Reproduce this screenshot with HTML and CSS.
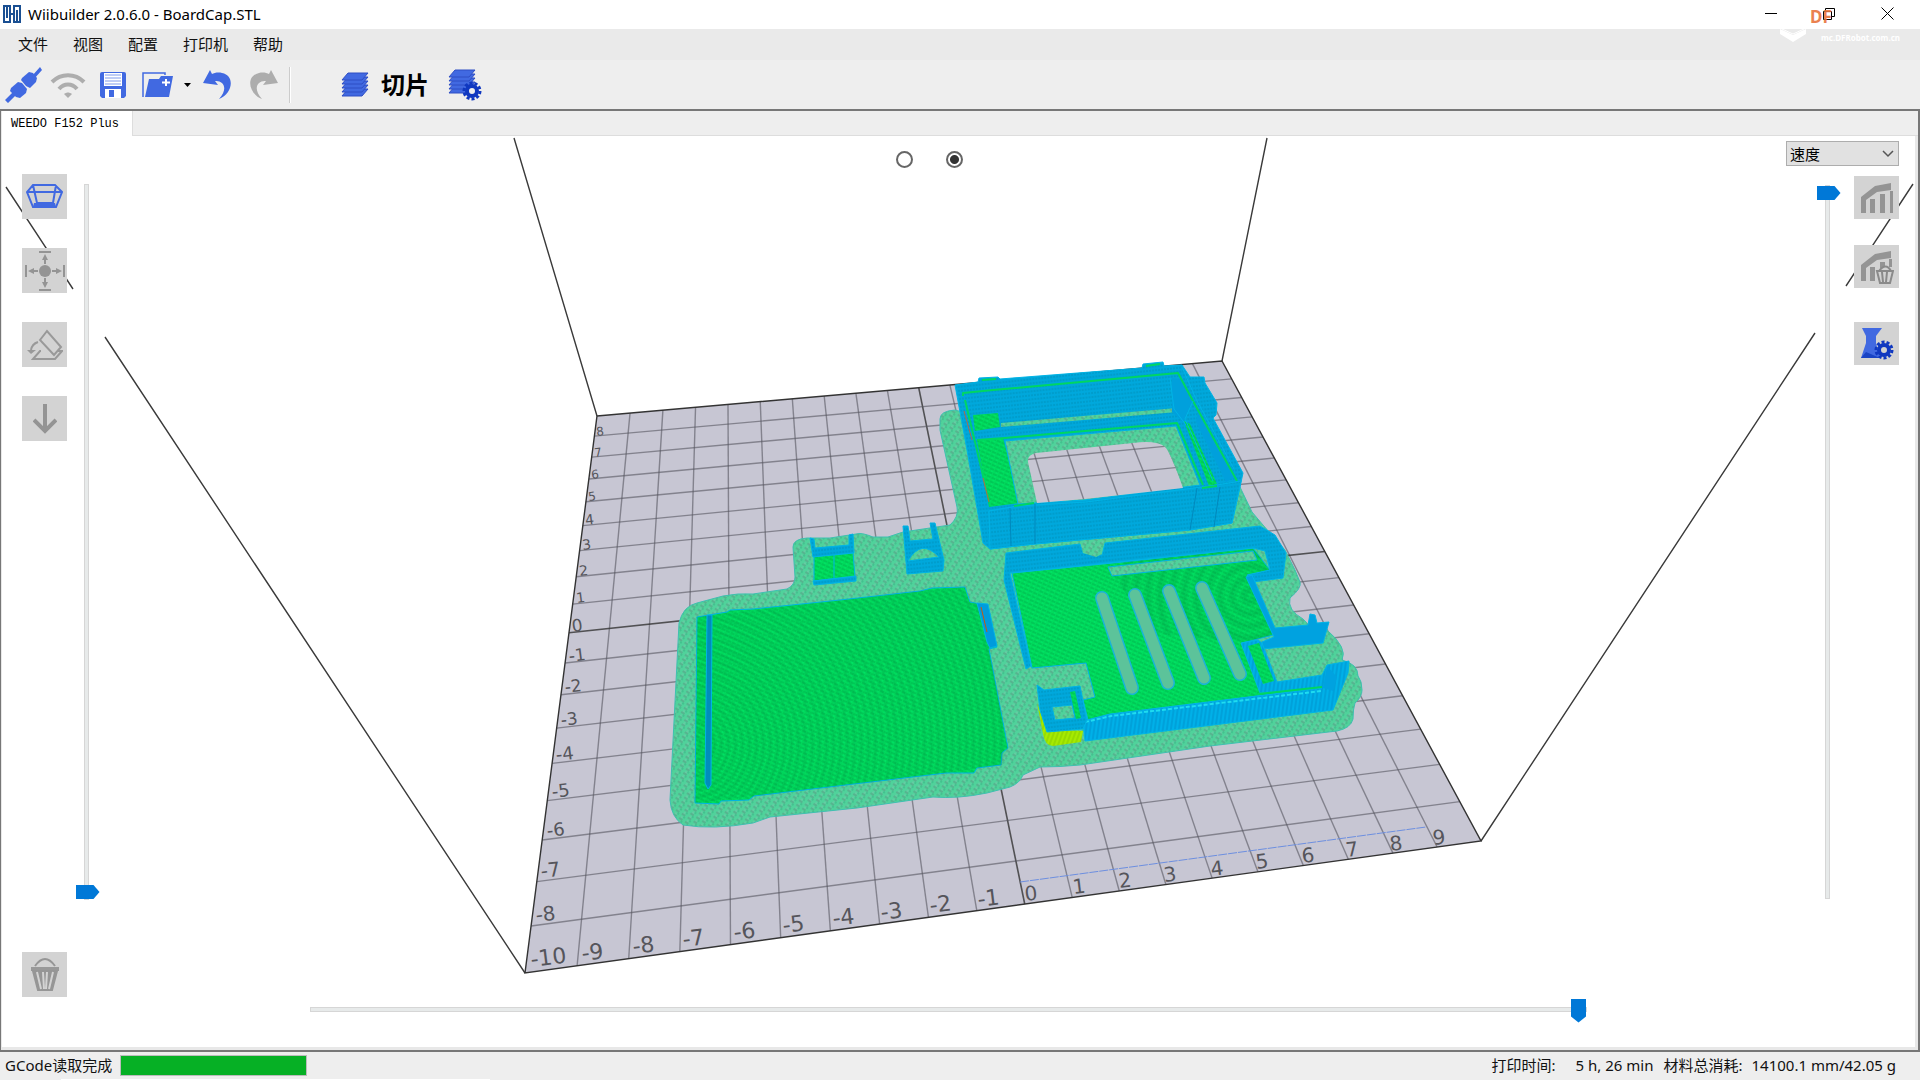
FILE: index.html
```html
<!DOCTYPE html>
<html lang="zh-CN">
<head>
<meta charset="utf-8">
<title>Wiibuilder 2.0.6.0 - BoardCap.STL</title>
<link rel="stylesheet" href="styles.css">
</head>
<body>
<div class="app">
  <header class="titlebar">
    <svg class="app-icon" width="18" height="18" viewBox="0 0 18 18" fill="none" stroke="#1a4f92" stroke-width="2"><path d="M1 1v16h6V1zM4 1v12M11 1v16h6V1zM14 5v12M6 9h6"/><path d="M9 3v4M9 11v4" stroke="#fff" stroke-width="1"/></svg>
    <h1 class="title">Wiibuilder 2.0.6.0 - BoardCap.STL</h1>
    <div class="window-buttons">
      <button type="button" aria-label="最小化"><svg width="12" height="12" viewBox="0 0 12 12"><path d="M0 5.500h12" stroke="#000"/></svg></button>
      <button type="button" class="restore" aria-label="还原"><svg width="12" height="12" viewBox="0 0 12 12" fill="none" stroke="#000"><path d="M.5 3.500h8v8h-8zM2.500 3.500v-3h9v8h-3"/></svg><span class="mark">DF</span></button>
      <button type="button" aria-label="关闭"><svg width="13" height="13" viewBox="0 0 13 13"><path d="M.5.5l12 12M12.500.5l-12 12" stroke="#000"/></svg></button>
    </div>
  </header>

  <nav class="menubar">
    <button type="button">文件</button>
    <button type="button">视图</button>
    <button type="button">配置</button>
    <button type="button">打印机</button>
    <button type="button">帮助</button>
    <div class="watermark">
      <svg width="28" height="14" viewBox="0 0 28 14"><path d="M1 0v5l13 8 13-8V0l-13 6z" fill="#fff"/><path d="M3 0l11 5L25 0" fill="none" stroke="#fff"/></svg>
      <span>mc.DFRobot.com.cn</span>
    </div>
  </nav>

  <div class="toolbar">
    <button type="button" aria-label="连接"><svg width="38" height="38" viewBox="0 0 38 38" fill="#4169e1"><path d="M1 34l9-9 3 3-9 9zM28 10l8-9 2 3-8 9z"/><path d="M7 22l7-6 4 1 5 6-1 4-6 5-4-1-6-6z"/><path d="M18 12l7-6 4 1 4 5-1 4-6 6-4-2-5-6z"/></svg></button>
    <button type="button" aria-label="无线"><svg width="36" height="28" viewBox="0 0 36 28" fill="none" stroke="#adadad"><path d="M2 11c9-9 23-9 32 0" stroke-width="4"/><path d="M9 18c5-6 13-6 18 0" stroke-width="4"/><path d="M14 23c3-2 5-2 8 0l-4 4z" fill="#adadad" stroke="none"/></svg></button>
    <button type="button" aria-label="保存"><svg width="28" height="28" viewBox="0 0 28 28"><path d="M3 1h22q2 0 2 2v22l-2 2H3l-2-2V3q0-2 2-2z" fill="#4169e1"/><path d="M5 2h18v13H5z" fill="#fff"/><path d="M6 4h16M6 7h16M6 10h16M6 13h16" stroke="#7e9aec"/><path d="M6 18h16v9H6z" fill="#fff"/><path d="M10 19h5v7h-5z" fill="#4169e1"/></svg></button>
    <button type="button" aria-label="打开"><svg width="34" height="28" viewBox="0 0 34 28" fill="#4169e1"><path d="M2 26V2h22v2" fill="none" stroke="#4169e1" stroke-width="1.500"/><path d="M8 8h10l2-3h12l-4 21H4z"/><path d="M25 8v7M21 11.500h8" stroke="#fff" stroke-width="2"/></svg></button>
    <button type="button" class="drop" aria-label="最近文件"><svg width="7" height="4" viewBox="0 0 7 4"><path d="M0 0h7L3.500 4z"/></svg></button>
    <button type="button" aria-label="撤销"><svg width="30" height="32" viewBox="0 0 30 32"><path d="M7 1L0 14l15 2-3-4c8-1 14 7 4 18C29 25 33 7 19 4c-4-1-8 0-10 1z" fill="#4169e1"/></svg></button>
    <button type="button" aria-label="重做"><svg width="30" height="32" viewBox="0 0 30 32"><path d="M23 1l7 13-15 2 3-4c-8-1-14 7-4 18C1 25-3 7 11 4c4-1 8 0 10 1z" fill="#adadad"/></svg></button>
    <span class="separator"></span>
    <button type="button" class="slice">
      <svg width="28" height="26" viewBox="0 0 28 26" stroke="#2f4ec4"><g fill="#4169e1"><path d="M1 24l6-7h20l-6 7z"/><path d="M1 20l6-7h20l-6 7z"/><path d="M1 16l6-7h20l-6 7z"/><path d="M1 12l6-7h20l-6 7z"/><path d="M1 8l6-7h20l-6 7z"/></g></svg>
      <span>切片</span>
    </button>
    <button type="button" class="slice-settings" aria-label="切片设置"><svg width="34" height="32" viewBox="0 0 34 32"><g fill="#4169e1" stroke="#2f4ec4"><path d="M1 24l6-7h20l-6 7z"/><path d="M1 20l6-7h20l-6 7z"/><path d="M1 16l6-7h20l-6 7z"/><path d="M1 12l6-7h20l-6 7z"/><path d="M1 8l6-7h20l-6 7z"/></g><circle cx="24" cy="22" r="8" fill="none" stroke="#1038c0" stroke-width="3" stroke-dasharray="3 2"/><circle cx="24" cy="22" r="5" fill="#eee" stroke="#1038c0" stroke-width="4"/></svg></button>
  </div>

  <main class="panel">
    <div class="tabs"><button type="button" class="tab">WEEDO F152 Plus</button></div>
    <div class="viewport">
      <svg class="scene" viewBox="2 136 1913 911">
        <defs>
          <pattern id="skirt" width="7" height="5" patternUnits="userSpaceOnUse" patternTransform="rotate(33)"><rect width="7" height="5" fill="#50d29b"/><path d="M0 1h4" stroke="#5c9684"/><path d="M3 3h2" stroke="#35b383"/><path d="M1 4h2" stroke="#7cc4ab"/></pattern>
          <pattern id="fill" width="5" height="4" patternUnits="userSpaceOnUse" patternTransform="rotate(24)"><rect width="5" height="4" fill="#00da5c"/><path d="M0 1h4" stroke="#00b850"/><path d="M2 3h2" stroke="#00e86a"/></pattern>
          <pattern id="wall" width="3" height="4" patternUnits="userSpaceOnUse" patternTransform="rotate(-6)"><rect width="3" height="4" fill="#00a8dc"/><path d="M0 1h2" stroke="#0093bc"/></pattern>
          <pattern id="ribs" width="4" height="6" patternUnits="userSpaceOnUse" patternTransform="rotate(8)"><rect width="4" height="6" fill="#00b0e8"/><path d="M1 0v6" stroke="#0092cc"/></pattern>
          <pattern id="lime" width="4" height="4" patternUnits="userSpaceOnUse" patternTransform="rotate(20)"><rect width="4" height="4" fill="#a6ea00"/><path d="M1 0v4" stroke="#86cc00"/></pattern>
          <radialGradient id="rings" gradientUnits="userSpaceOnUse" cx="690" cy="745" r="7" spreadMethod="repeat"><stop offset="0" stop-color="#007a38" stop-opacity="0"/><stop offset=".5" stop-color="#007a38" stop-opacity=".2"/><stop offset="1" stop-color="#007a38" stop-opacity="0"/></radialGradient>
          <radialGradient id="rings2" gradientUnits="userSpaceOnUse" cx="1250" cy="596" r="12" spreadMethod="repeat"><stop offset="0" stop-color="#007a38" stop-opacity="0"/><stop offset=".5" stop-color="#007a38" stop-opacity=".22"/><stop offset="1" stop-color="#007a38" stop-opacity="0"/></radialGradient>
          <clipPath id="window"><path d="M1037 503l-9-41q-1-7 8-9l97-10q24-3 32 4 5 4 18 41l-98 11z"/></clipPath>
        </defs>

        <g class="box"><path d="M514 138l83 278M1267 138l-45 223M6 187l67 102M105 337l420 636M1481 841l334-508M1846 286l67-102"/></g>

        <g id="plate">
          <path d="M597 416L1222 361 1481 841 525 973z" fill="#c7c6d3"/>
          <g id="grid"></g>
          <path d="M597 416L1222 361 1481 841 525 973z" class="edge"/>
        </g>
        <path d="M1020 882L1426 827" class="origin"/>

        <g class="axis">
          <g font-size="22"><text x="532" y="967">-10</text><text x="583" y="961">-9</text><text x="634" y="954">-8</text><text x="684" y="947">-7</text><text x="735" y="940">-6</text><text x="784" y="933">-5</text><text x="834" y="926">-4</text><text x="882" y="920">-3</text><text x="931" y="913">-2</text><text x="979" y="907">-1</text></g>
          <g font-size="20"><text x="1026" y="901">0</text><text x="1074" y="894">1</text><text x="1120" y="888">2</text><text x="1165" y="882">3</text><text x="1212" y="876">4</text><text x="1257" y="869">5</text><text x="1303" y="863">6</text><text x="1347" y="857">7</text><text x="1391" y="851">8</text><text x="1434" y="845">9</text><text x="537" y="922">-8</text><text x="542" y="878">-7</text></g>
          <g font-size="18"><text x="548" y="837">-6</text><text x="553" y="798">-5</text><text x="557" y="761">-4</text></g>
          <g font-size="17"><text x="562" y="726">-3</text><text x="566" y="693">-2</text><text x="570" y="662">-1</text><text x="573" y="632">0</text></g>
          <g font-size="14"><text x="577" y="603">1</text><text x="580" y="576">2</text><text x="583" y="550">3</text><text x="586" y="525">4</text></g>
          <g font-size="12"><text x="589" y="501">5</text><text x="592" y="479">6</text><text x="595" y="457">7</text><text x="597" y="436">8</text></g>
        </g>

        <path fill="url(#skirt)" stroke="#3fc0b0" d="M670 800q1 17 13 25 30 5 70-2l17-6 87-9 76-11q25 2 54-4l23-6q10-4 13-12l17-8q20 0 40-2l130-19 127-15q14-3 16-12 0-10 2-16 7-6 7-13 0-9-4-14 0-12-16-16 6-12-15-30-15 0-24-11-16-9-13-21 12-10 10-16l-5-12-10-20-22-25-11-13-12-25-285-77q-15 1-15 9v11l17 77q2 10-7 18l-47 7-15 5h-15q-12-5-17-3l-26 4h-23q-14 1-14 9l2 30q0 8-8 12l-34 5q-15-1-30 2l-26 7q-14 3-18 20z"/>

        <g class="part">
          <path fill="url(#fill)" d="M697 617l30-5 3-2 23-1 87-9 80-9 12-3 33-1 5 15 10 2 17 43-8 2 19 99-6 5-1 12-24 3-3 5h-28l-192 23-5 4-28 1-2 3-24-1z"/>
          <path fill="url(#rings)" stroke="none" d="M697 617l223-26 45-4 5 15 10 2 9 45 19 99-6 17-24 3-31 5-192 23-60 7z"/>
          <path fill="#008dbb" d="M707 615h5l-1 170-3 4-3-6z"/>
          <path fill="#009bdc" d="M977 603l11 1 9 42-7 2-3-6z"/><path d="M981 607l6 25" stroke="#c45a10" fill="none"/>
        </g>

        <g class="part">
          <path fill="url(#fill)" d="M814 556l39-4 2 25-41 4z"/><path d="M834 555v24" fill="none"/>
          <path fill="url(#wall)" d="M810 538l4 1 1 9 34-3V535l4-1 1 19-41 4zM813 581l43-5v5l-42 4z"/>
          <path fill="url(#wall)" d="M903 526h5l2 15 23-2-3-16h5l9 37-1 11-36 3z"/>
          <path fill="url(#skirt)" d="M908 561q13-23 31-4z"/>
        </g>

        <g class="part">
          <path fill="url(#wall)" d="M955 385l23-3 1-4 19-1 2 2 142-11 1-4 20-2 1 4 18-1 8 12h14l1 6 12 20-1 12-3 3 30 55-3 14-8 36-42 7-155 14-45 5-7-6-16-93z"/>
          <path class="ridge" d="M982 380l14-1M1146 366l14-2"/>
          <path fill="url(#fill)" stroke="none" d="M973 415l25-2 2 14-25 4z"/>
          <path fill="url(#skirt)" stroke="none" d="M1001 423l176-15v4l-176 15z"/>
          <path fill="url(#fill)" stroke="none" d="M977 440l26-2 17 65-31 4z"/>
          <path fill="url(#skirt)" d="M1005 441l171-15 24 59-115 15-67 4z"/>
          <path fill="url(#fill)" stroke="none" d="M1184 421l6 3 27 60-8 2z"/>
          <path fill="#00a0dc" stroke="none" d="M1172 378l8 1 12 23-9 20-11-10zM1198 410l38 66-10 6-30-60z"/>
          <path class="ridge" d="M963 396v-3l30-3 185-17 15 28 44 80M977 440l28-2 172-15 26 62M965 400l25 105"/>
          <path d="M964 411l8 29M983 478l6 24" stroke="#b06a48" fill="none"/>
          <path fill="url(#wall)" d="M989 511l28-5 69-4 131-17 24-4-9 42-42 7-155 14-45 5z"/>
          <path d="M1010 508l1 38M1035 504v40M1197 488l-7 42M1220 487l-6 40" fill="none" stroke="#0089bd"/>
          <path class="ridge" d="M1014 506l20-3M1202 488l15-2"/>
          <path fill="none" d="M1170 378l4 31 12 16M1193 401l-8 18 28 62M1182 367l14 32 38 70"/>
        </g>
        <use href="#plate" clip-path="url(#window)"/>

        <g class="part">
          <path fill="url(#fill)" d="M1012 573l111-11 130-14 17 22-20 5 23 60-31 8 19 49 60-4-211 27-22 5-5-20 12-3-9-34-54 5z"/>
          <path fill="url(#rings2)" stroke="none" d="M1123 562l130-14 17 22-20 5 23 60-31 8-90-10-40-60z"/>
          <path fill="url(#wall)" d="M1006 553l74-9 3 9 19 2 3-12 155-17 15 9 11 18-3 25-30 4-6-7 23-5-5-19-12-3-243 25 21 93-5 3-22-89z"/>
          <path fill="url(#skirt)" stroke="none" d="M1081 544l22-2-1 12-6 3-13-4z"/>
          <path fill="url(#skirt)" d="M1108 567l145-16 4 9-145 16z"/>
          <g class="slot"><path d="M1102 598l30 90M1135 595l33 88M1169 591l35 87M1202 588l38 86"/></g>
          <g class="slot-floor"><path d="M1102 598l30 90M1135 595l33 88M1169 591l35 87M1202 588l38 86"/></g>
          <path fill="#00a2e0" d="M1246 577l6-2 23 53 33-3 2-11 5 1 2 8 12-1-6 21-60 6-1-7 12-5z"/>
          <path fill="url(#ribs)" d="M1241 643l17-3 4 3 15 39 45-7 5-10 22-4-1 12-15 37-248 31-2-20 27-7 212-26-62 5z"/>
          <path fill="url(#fill)" stroke="none" d="M1248 646l11-3 15 38-11 3z"/>
          <path fill="#00a2e0" stroke="none" d="M1327 666l-4 22 10 3 4-14z"/>
          <path class="ridge" d="M1258 694l64-7"/>
          <path d="M1085 722l26-6 210-25" fill="none" stroke="#1fdcf0" stroke-width="2" stroke-dasharray="4 2"/>
          <path fill="url(#lime)" stroke="none" d="M1037 703l10 27 36 1-2 11-28 4q-8 0-10-12z"/>
          <path fill="url(#wall)" d="M1037 685l7 5 36-4 7 34-4 9-36 3-7-22z"/>
          <path fill="url(#skirt)" d="M1052 707l20-2 3 13-20 2z"/>
          <path fill="url(#fill)" stroke="none" d="M1070 692l5-1 6 27-5 1z"/>
        </g>
      </svg>

      <div class="tools left">
        <div class="tool-group">
          <button type="button" aria-label="视图"><svg width="37" height="25" viewBox="0 0 37 25" fill="none" stroke="#4169e1" stroke-width="2"><path d="M7 1h22l7 7-6 15H7L1 8zM7 1l4 18h16L30 1M1 8h35M9 20h20"/><path d="M8 19h21l1 4H7z" fill="#4169e1" stroke="none"/></svg></button>
          <button type="button" aria-label="移动"><svg width="40" height="40" viewBox="0 0 40 40" fill="#949494"><circle cx="20" cy="20" r="6"/><path d="M14 0h12v2H14zM14 38h12v2H14zM0 14h2v12H0zM38 14h2v12h-2zM19 8h2v5h-2zM19 27h2v5h-2zM8 19h5v2H8zM27 19h5v2h-5z"/><path d="M20 3l3 6h-6zM20 37l-3-6h6zM3 20l6-3v6zM37 20l-6 3v-6z"/></svg></button>
          <button type="button" aria-label="放平"><svg width="36" height="32" viewBox="0 0 36 32" fill="none" stroke="#999" stroke-width="2"><path d="M13 11l7-9 14 16-7 8zM14 22h-1l-7 8h22l7-8h-4"/><path d="M11 13q-6 2-7 8"/><path d="M0 21h9l-5 4z" fill="#999" stroke="none"/></svg></button>
          <button type="button" aria-label="落到平台"><svg width="24" height="30" viewBox="0 0 24 30"><path d="M10 0h4v24h-4z" fill="#949494"/><path d="M1 16l11 11 11-11" fill="none" stroke="#949494" stroke-width="4"/></svg></button>
        </div>
        <button type="button" aria-label="删除"><svg width="28" height="34" viewBox="0 0 28 34" fill="none" stroke="#969696" stroke-width="2"><path d="M4 8q10-14 20 0"/><path d="M0 9h28v4H0z" fill="#999" stroke="none"/><path d="M2 13l5 19h14l5-19z" fill="#969696"/><path d="M6 14l4 17M12 14l1 17M16 14l-1 17M22 14l-4 17" stroke="#d3d3d3"/></svg></button>
      </div>
      <input class="range vertical low" type="range" min="0" max="100" value="0" aria-label="最低层">

      <div class="center">
        <div class="radios">
          <input type="radio" name="mode" aria-label="模型">
          <input type="radio" name="mode" aria-label="切片预览" checked>
        </div>
        <input class="range horizontal" type="range" min="0" max="100" value="100" aria-label="进度">
      </div>

      <div class="side">
        <div class="combo">
          <select aria-label="显示方式"><option>速度</option></select>
          <svg width="12" height="8" viewBox="0 0 12 8"><path d="M1 1l5 5 5-5" fill="none" stroke="#555" stroke-width="1.500"/></svg>
        </div>
        <div class="side-row">
          <input class="range vertical high" type="range" min="0" max="100" value="100" aria-label="最高层">
          <div class="tools right">
            <button type="button" aria-label="添加支撑"><svg width="34" height="32" viewBox="0 0 34 32" fill="#949494"><path d="M1 31V15L15 4l16-3v7l-14 2-11 8v13zM10 17h5v14h-5zM20 12h5v19h-5zM30 9h3v22h-3z"/></svg></button>
            <button type="button" class="gap" aria-label="删除支撑"><svg width="34" height="34" viewBox="0 0 34 34" fill="#949494"><path d="M1 31V15L15 4l16-3v7l-14 2-11 8v13zM10 17h5v14h-5zM20 12h5v6h-5zM29 9h3v8h-3z"/><g fill="#d3d3d3" stroke="#8a8a8a" stroke-width="2"><path d="M19 21q7-9 12 0"/><path d="M17 21h16l-3 12H20zM22 22l1 10M27 22l-1 10"/></g></svg></button>
            <button type="button" aria-label="打印设置"><svg width="34" height="34" viewBox="0 0 34 34"><path d="M2 1h20l-6 8v7l4 15H1L6 16V9z" fill="#4169e1"/><path d="M1 31l5-6 14 6z" fill="#1a44c4"/><circle cx="24" cy="23" r="8" fill="none" stroke="#1038c0" stroke-width="3" stroke-dasharray="3 2"/><circle cx="24" cy="23" r="5" fill="#d3d3d3" stroke="#1038c0" stroke-width="4"/></svg></button>
          </div>
        </div>
      </div>
    </div>
  </main>

  <footer class="statusbar">
    <label for="job">GCode读取完成</label>
    <progress id="job" max="100" value="100"></progress>
    <p class="stats"><span>打印时间:</span><span class="time">5 h, 26 min</span><span>材料总消耗:</span><span class="used">14100.1 mm/42.05 g</span></p>
  </footer>
</div>
<script src="grid.js"></script>
</body>
</html>
```
FILE: styles.css
```css
* { box-sizing: border-box; }
body { margin: 0; font: 15px/20px "Noto Sans", "Noto Sans CJK SC", sans-serif; color: #111; background: #fff; }
button { margin: 0; padding: 0; border: 0; background: none; color: inherit; font: inherit; }
svg { display: block; }
.app { display: flex; flex-direction: column; min-height: 100vh; }

.titlebar { display: flex; align-items: center; height: 29px; padding: 0 26px 2px 3px; gap: 7px; background: #fff; }
.title { margin: 0; flex: 1; font-size: 15px; font-weight: 400; line-height: 20px; color: #000; }
.window-buttons { display: flex; gap: 46px; }
.restore { position: relative; }
.mark { position: absolute; left: -13px; top: 0; font: bold 17px/20px "Noto Sans", sans-serif; color: #e8743c; opacity: .9; }

.menubar { display: flex; align-items: center; gap: 25px; height: 31px; padding: 0 20px 2px 18px; background: #eaeaea; }
.watermark { display: flex; align-items: flex-start; gap: 14px; margin-left: auto; align-self: stretch; color: #fff; font: bold 8px/18px "Noto Sans", sans-serif; }

.toolbar { display: flex; align-items: center; height: 49px; background: #eee; }
.toolbar button { display: flex; justify-content: center; width: 45px; }
.toolbar .drop { width: 15px; }
.separator { width: 2px; height: 36px; margin-left: 4px; background: #ccc; border-right: 1px solid #fff; }
.toolbar .slice { align-items: center; width: auto; gap: 12px; margin: 0 13px 0 50px; font-size: 24px; font-weight: 700; line-height: 28px; color: #000; }

.panel { flex: 1; display: flex; flex-direction: column; border: 2px solid #777; border-left-width: 1px; padding: 0 3px 3px 1px; background: #e8e8e8; }
.tabs { display: flex; height: 25px; margin-right: -3px; background: #eee; border-bottom: 1px solid #ddd; }
.tab { height: 25px; padding: 0 13px 0 9px; background: #fff; border-right: 1px solid #ddd; font: 12px/22px "Liberation Mono", monospace; color: #000; }

.viewport { position: relative; flex: 1; display: flex; background: #fff; }
.scene { position: absolute; inset: 0; width: 100%; height: 100%; }
.box path { fill: none; stroke: #3a3a3a; stroke-width: 1.4; }
#plate .edge { fill: none; stroke: #333; stroke-width: 1.4; }
#grid path { stroke: #55555f; stroke-opacity: .6; stroke-width: 1.4; }
#grid path.zero { stroke: #333; stroke-opacity: .8; stroke-width: 1.6; }
.origin { stroke: #6d8fe0; stroke-dasharray: 9 1; }
.axis { font-family: "DejaVu Sans", sans-serif; fill: #55555b; }
.axis text { transform-box: fill-box; transform-origin: 0 100%; transform: rotate(-7deg); }
.part { stroke: #00b4e6; stroke-width: 1; stroke-linejoin: round; }
.part .ridge { fill: none; stroke: #00d662; stroke-width: 2; }
.slot path { fill: none; stroke: #1ab4d8; stroke-width: 14; stroke-linecap: round; }
.slot-floor path { fill: none; stroke: #5cc39a; stroke-width: 11; stroke-linecap: round; }

.tools { position: relative; display: flex; flex-direction: column; }
.tools button { display: grid; place-items: center; width: 45px; height: 45px; background: #d3d3d3; }
.left { justify-content: space-between; padding: 38px 7px 50px 20px; }
.tool-group { display: flex; flex-direction: column; gap: 29px; }
.right { gap: 26px; }
.right button { height: 43px; }
.right .gap { margin-bottom: 8px; }

.range { position: relative; appearance: none; margin: 0; background: none; }
.range::-webkit-slider-thumb { appearance: none; background: #0078d7; }
.range::-webkit-slider-runnable-track { background: #e7eaea; border: 1px solid #d6d6d6; }
.vertical { writing-mode: vertical-lr; width: 24px; height: auto; }
.vertical::-webkit-slider-runnable-track { width: 5px; }
.vertical::-webkit-slider-thumb { width: 24px; height: 14px; margin-left: -9px; clip-path: polygon(0 0, 75% 0, 100% 50%, 75% 100%, 0 100%); }
.low { direction: rtl; margin: 48px 2px 147px 0; }
.high { direction: rtl; margin: 9px 0 148px; }
.horizontal { width: 100%; height: 24px; }
.horizontal::-webkit-slider-runnable-track { height: 5px; }
.horizontal::-webkit-slider-thumb { width: 15px; height: 24px; margin-top: -9px; clip-path: polygon(0 0, 100% 0, 100% 75%, 50% 100%, 0 75%); }

.center { position: relative; flex: 1; display: flex; flex-direction: column; justify-content: space-between; padding: 15px 199px 26px 210px; }
.radios { display: flex; justify-content: center; gap: 33px; padding-right: 39px; }
.radios input { appearance: none; width: 17px; height: 17px; margin: 0; border: 2px solid #666; border-radius: 50%; background: #fff; }
.radios input:checked { background: radial-gradient(circle, #333 4px, #fff 5px); }

.side { position: relative; display: flex; flex-direction: column; width: 129px; padding: 5px 16px 0 0; }
.combo { position: relative; margin-bottom: 10px; }
.combo select { display: block; appearance: none; width: 100%; height: 25px; padding: 0 3px; border: 1px solid #adadad; border-radius: 0; background: #e1e1e1; font: 15px/20px "Noto Sans CJK SC", sans-serif; color: #000; }
.combo svg { position: absolute; right: 5px; top: 9px; pointer-events: none; }
.side-row { flex: 1; display: flex; justify-content: space-between; padding-left: 29px; }

.statusbar { position: relative; display: flex; align-items: center; height: 28px; padding: 0 24px 2px 5px; gap: 8px; background: linear-gradient(#fff, #fff) 61px 100% / 429px 1px no-repeat #eee; }
.statusbar progress { appearance: none; width: 187px; height: 21px; border: 1px solid #bcbcbc; }
.statusbar progress::-webkit-progress-bar { background: #e6e6e6; }
.statusbar progress::-webkit-progress-value { background: #06b025; }
.stats { display: flex; margin: 0 0 0 auto; }
.time { margin: 0 10px 0 20px; }
.used { margin-left: 9px; }
```
FILE: grid.js
```js
// Draws the 20 x 18 cm build plate grid in perspective.
const corners = [[597, 416], [1222, 361], [1481, 841], [525, 973]];
const COLS = 20, ROWS = 18;

// Unit square to quad projection.
function projector([[x0, y0], [x1, y1], [x2, y2], [x3, y3]]) {
  const dx1 = x1 - x2, dx2 = x3 - x2, dx3 = x0 - x1 + x2 - x3;
  const dy1 = y1 - y2, dy2 = y3 - y2, dy3 = y0 - y1 + y2 - y3;
  const det = dx1 * dy2 - dx2 * dy1;
  const g = (dx3 * dy2 - dx2 * dy3) / det;
  const h = (dx1 * dy3 - dx3 * dy1) / det;
  return (u, v) => {
    const w = g * u + h * v + 1;
    return [((x1 - x0 + g * x1) * u + (x3 - x0 + h * x3) * v + x0) / w,
            ((y1 - y0 + g * y1) * u + (y3 - y0 + h * y3) * v + y0) / w];
  };
}

const project = projector(corners);
const grid = document.getElementById('grid');

function line(a, b, zero) {
  const path = document.createElementNS('http://www.w3.org/2000/svg', 'path');
  path.setAttribute('d', `M${project(...a)}L${project(...b)}`);
  if (zero) path.setAttribute('class', 'zero');
  grid.append(path);
}

for (let i = 1; i < COLS; i++) line([i / COLS, 0], [i / COLS, 1], i === COLS / 2);
for (let j = 1; j < ROWS; j++) line([0, j / ROWS], [1, j / ROWS], j === ROWS / 2);
```
